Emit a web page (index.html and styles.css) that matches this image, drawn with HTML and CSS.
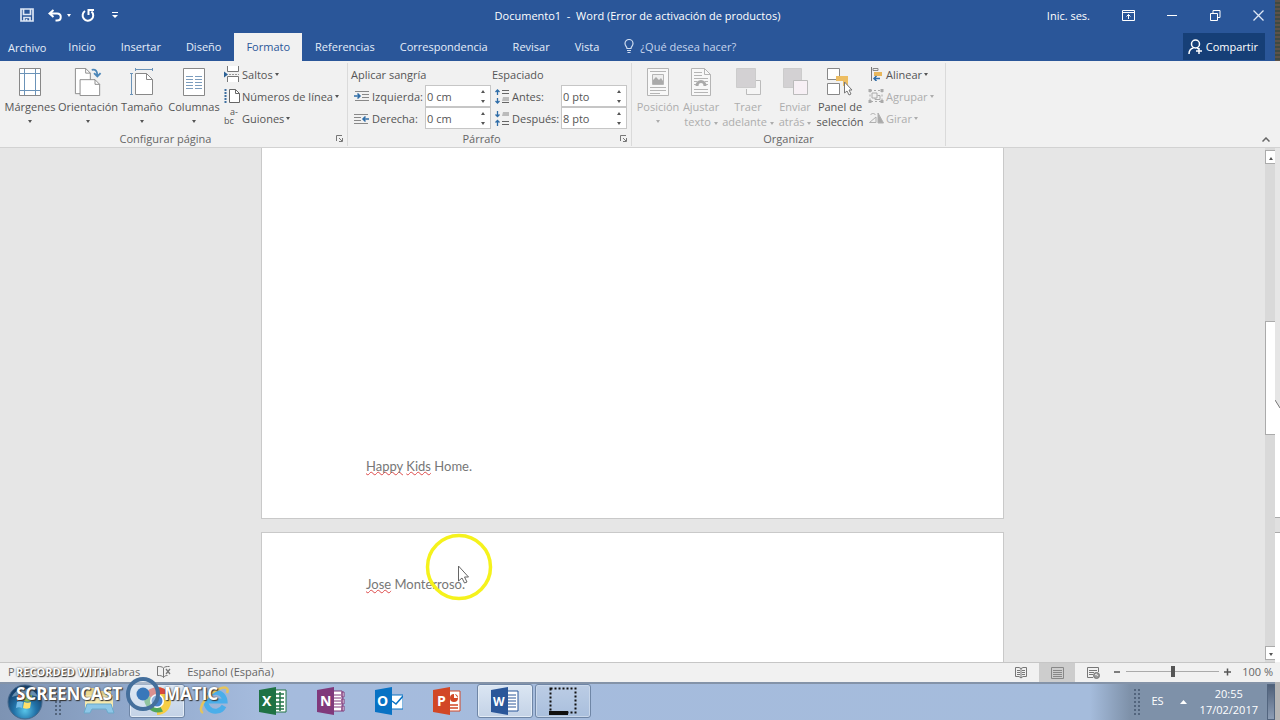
FILE: index.html
```html
<!DOCTYPE html>
<html lang="es">
  <head>
    <meta charset="UTF-8" />
    <meta name="viewport" content="width=device-width, initial-scale=1.0" />
    <title>Documento1 - Word</title>
    <link rel="stylesheet" href="styles.css">
  </head>
  <body>
    <div class="screen">
      <div class="desktop">
        <header class="titlebar">
          <div class="quick-access">
            <button type="button" aria-label="Guardar"><svg width="14" height="14" viewBox="0 0 14 14" fill="none" stroke="#dce6f5" stroke-width="2"><path d="M1 1h12v12H1zM3.500 1v5.500h7V1M4 13V9.500h6V13M6.500 13v-2" stroke-width="1.700"/></svg></button>
            <button type="button" class="undo" aria-label="Deshacer"><svg width="14" height="13" viewBox="0 0 14 13" fill="none" stroke="#fff" stroke-width="2"><path d="M5.500 1L1.500 4.500l4 3.500M2 4.500h7c5 0 5 7 0 7H7.500"/></svg><i class="caret"></i></button>
            <button type="button" aria-label="Rehacer"><svg width="14" height="14" viewBox="0 0 14 14" fill="none" stroke="#fff" stroke-width="2"><path d="M4 3A5.300 5.300 0 1 0 10.500 3.500M7.500 7V2H13"/></svg></button>
            <button type="button" class="more" aria-label="Personalizar"><svg width="6" height="7" viewBox="0 0 6 7" fill="#fff"><path d="M0 0h6v1H0zM0 3h6L3 6z"/></svg></button>
          </div>
          <div class="title">Documento1 &nbsp;-&nbsp; Word (Error de activación de productos)</div>
          <div class="window-buttons">
            <a href="#" class="signin">Inic. ses.</a>
            <button type="button" aria-label="Opciones de presentación"><svg width="13" height="11" viewBox="0 0 13 11" fill="none" stroke="#fff"><path d="M.5.500h12v10H.5zM.5 2.500h12M6.500 9V4.500M4.500 6.500l2-2 2 2"/></svg></button>
            <button type="button" aria-label="Minimizar"><svg width="11" height="11" viewBox="0 0 11 11" stroke="#fff"><path d="M0 5.500h10"/></svg></button>
            <button type="button" aria-label="Restaurar"><svg width="11" height="11" viewBox="0 0 11 11" fill="none" stroke="#fff"><path d="M.5 3.500h7v7h-7zM3 3.500V.500h7v7H7.500"/></svg></button>
            <button type="button" aria-label="Cerrar"><svg width="11" height="11" viewBox="0 0 11 11" stroke="#dfe8f6" stroke-width="1.300"><path d="M.5.500l10 10M10.500.500l-10 10"/></svg></button>
          </div>
        </header>

        <nav class="tabs">
          <button type="button" class="tab file">Archivo</button>
          <button type="button" class="tab">Inicio</button>
          <button type="button" class="tab">Insertar</button>
          <button type="button" class="tab">Diseño</button>
          <button type="button" class="tab active">Formato</button>
          <button type="button" class="tab">Referencias</button>
          <button type="button" class="tab">Correspondencia</button>
          <button type="button" class="tab">Revisar</button>
          <button type="button" class="tab">Vista</button>
          <button type="button" class="tab tell-me"><svg width="10" height="14" viewBox="0 0 10 14" fill="none" stroke="#cfdcf0"><path d="M3 9.500C3 7.500 1 7 1 4.500a4 4 0 0 1 8 0C9 7 7 7.500 7 9.500zM3 11.500h4M3.500 13.500h3" stroke-width="1.200"/></svg>¿Qué desea hacer?</button>
          <button type="button" class="share"><svg width="15" height="16" viewBox="0 0 15 16" fill="none" stroke="#fff" stroke-width="1.500"><circle cx="7.500" cy="5" r="4"/><path d="M1 15c0-3.500 2-5.500 4.500-6M9 9l2 1M11 9v6M8 12h6"/></svg>Compartir</button>
        </nav>

        <section class="ribbon">
          <div class="group page-setup">
            <div class="group-body">
              <div class="big-buttons">
                <button type="button" class="big"><svg width="22" height="28" viewBox="0 0 22 28" fill="none"><path d="M.5.500h21v27H.5z" fill="#fff" stroke="#888"/><path d="M5.500 1v26M16.500 1v26M1 5.500h20M1 22.500h20" stroke="#6b93b8"/></svg><span>Márgenes</span><i class="caret"></i></button>
                <button type="button" class="big"><svg width="28" height="30" viewBox="0 0 28 30" fill="none"><path d="M.5.500h11l5 5v22H.5z" fill="#fff" stroke="#888"/><path d="M11.500.500v5h5" stroke="#888"/><path d="M5.500 12.500h16l5 5v12h-21z" fill="#fff" stroke="#888"/><path d="M21.500 12.500v5h5" stroke="#888"/><path d="M18 2c4-1 6 1 6 6M20.500 5.500L24 9l3.500-3.500" stroke="#4c86b8" stroke-width="2"/></svg><span>Orientación</span><i class="caret"></i></button>
                <button type="button" class="big"><svg width="24" height="28" viewBox="0 0 24 28" fill="none"><path d="M5.500 5.500h11l6 6v15h-17z" fill="#fff" stroke="#888"/><path d="M16.500 5.500v6h6" stroke="#888"/><path d="M5.500 1.500h17M5.500 0v3M22.500 0v3M1.500 5.500v21M0 5.500h3M0 26.500h3" stroke="#6b93b8"/></svg><span>Tamaño</span><i class="caret"></i></button>
                <button type="button" class="big"><svg width="22" height="28" viewBox="0 0 22 28" fill="none"><path d="M.5.500h21v27H.5z" fill="#fff" stroke="#888"/><path d="M3 8.500h7M3 11.500h7M3 14.500h7M3 17.500h7M3 20.500h7M12 8.500h7M12 11.500h7M12 14.500h7M12 17.500h7M12 20.500h7" stroke="#7b9cbd"/></svg><span>Columnas</span><i class="caret"></i></button>
              </div>
              <div class="small-buttons">
                <button type="button" class="small"><svg width="16" height="16" viewBox="0 0 16 16" fill="none" stroke="#777"><path d="M3.500 0v5.500h11V0M3.500 16v-5.500h11V16" fill="#fff"/><path d="M5 8.500h10" stroke="#999" stroke-dasharray="2 1"/><path d="M0 5.500l4 3-4 3z" fill="#2b6095" stroke="none"/></svg>Saltos<i class="caret"></i></button>
                <button type="button" class="small"><svg width="16" height="14" viewBox="0 0 16 14" fill="none"><path d="M5.500.500h6l4 4v9h-10z" fill="#fff" stroke="#666"/><path d="M11.500.500v4h4" stroke="#666"/><path d="M1.500 0v14" stroke="#3e6f9f" stroke-width="2" stroke-dasharray="2 1"/></svg>Números de línea<i class="caret"></i></button>
                <button type="button" class="small"><svg class="hyphens" width="16" height="22" viewBox="0 0 16 22" fill="#555"><text x="0" y="17">bc</text><text x="6" y="8">a-</text></svg>Guiones<i class="caret"></i></button>
              </div>
            </div>
            <div class="group-label"><span>Configurar página</span><button type="button" class="launcher" aria-label="Configurar página"><svg width="7" height="7" viewBox="0 0 7 7" fill="none" stroke="#777"><path d="M.5 6V.500H6M3 3l3 3M6.500 3v3.500H3"/></svg></button></div>
          </div>

          <div class="group paragraph">
            <div class="group-body">
              <div class="fields indent">
                <h2>Aplicar sangría</h2>
                <svg width="16" height="13" viewBox="0 0 16 13" fill="none"><path d="M1 1.500h14M8 4.500h7M8 7.500h7M1 10.500h14" stroke="#888"/><path d="M0 6h6M3.500 3.500L6 6 3.500 8.500" stroke="#2f6da8" stroke-width="1.500"/></svg>
                <label for="left">Izquierda:</label>
                <div class="spin"><input type="text" id="left" value="0 cm"><div class="arrows"><button type="button" aria-label="Más"><i class="caret up"></i></button><button type="button" aria-label="Menos"><i class="caret"></i></button></div></div>
                <svg width="16" height="13" viewBox="0 0 16 13" fill="none"><path d="M0 2.500h14M0 5.500h7M0 8.500h7M0 11.500h14" stroke="#888"/><path d="M9 7h6M11.500 4.500L9 7l2.500 2.500" stroke="#2f6da8" stroke-width="1.500"/></svg>
                <label for="right">Derecha:</label>
                <div class="spin"><input type="text" id="right" value="0 cm"><div class="arrows"><button type="button" aria-label="Más"><i class="caret up"></i></button><button type="button" aria-label="Menos"><i class="caret"></i></button></div></div>
              </div>
              <div class="fields spacing">
                <h2>Espaciado</h2>
                <svg width="15" height="15" viewBox="0 0 15 15" fill="none"><path d="M7 1.500h7M7 4.500h7M7 13.500h7" stroke="#666"/><path d="M8 8h6v4H7z" fill="#bbb"/><path d="M2.500 6V1M.5 3l2-2 2 2M2.500 9v5M.5 12l2 2 2-2" stroke="#2f6da8" stroke-width="1.300"/></svg>
                <label for="before">Antes:</label>
                <div class="spin"><input type="text" id="before" value="0 pto"><div class="arrows"><button type="button" aria-label="Más"><i class="caret up"></i></button><button type="button" aria-label="Menos"><i class="caret"></i></button></div></div>
                <svg width="15" height="15" viewBox="0 0 15 15" fill="none"><path d="M7 10.500h7M7 13.500h7" stroke="#666"/><path d="M8 1h6v4H7z" fill="#bbb"/><path d="M2.500 0v5M.5 3.500l2 2 2-2M2.500 15v-5M.5 11.500l2-2 2 2" stroke="#2f6da8" stroke-width="1.300"/></svg>
                <label for="after">Después:</label>
                <div class="spin"><input type="text" id="after" value="8 pto"><div class="arrows"><button type="button" aria-label="Más"><i class="caret up"></i></button><button type="button" aria-label="Menos"><i class="caret"></i></button></div></div>
              </div>
            </div>
            <div class="group-label"><span>Párrafo</span><button type="button" class="launcher" aria-label="Párrafo"><svg width="7" height="7" viewBox="0 0 7 7" fill="none" stroke="#777"><path d="M.5 6V.500H6M3 3l3 3M6.500 3v3.500H3"/></svg></button></div>
          </div>

          <div class="group arrange">
            <div class="group-body">
              <div class="big-buttons">
                <button type="button" class="big" disabled><svg width="22" height="28" viewBox="0 0 22 28" fill="none" stroke="#b5b5b5"><path d="M.5.500h21v27H.5z" fill="#f8f8f8"/><path d="M3 3.500h16M3 19.500h16M3 22.500h16M3 25.500h10"/><path d="M5.500 6.500h11v10h-11z" fill="#eee"/><path d="M6 16v-4l3-3 3 3 2-2 2 3v3z" fill="#aaa" stroke="none"/></svg><span>Posición</span><i class="caret"></i></button>
                <button type="button" class="big" disabled><svg width="20" height="28" viewBox="0 0 20 28" fill="none" stroke="#b5b5b5"><path d="M.5.500h13l6 6v21H.5z" fill="#f8f8f8"/><path d="M13.500.500v6h6M3 4.500h8M3 7.500h8M3 10.500h14M3 13.500h3M14 13.500h3M3 16.500h2M15 16.500h2M3 21.500h14M3 24.500h14"/><path d="M6 18c0-6 8-6 8 0" stroke="#aaa" stroke-width="3"/></svg><span>Ajustar<br>texto <i class="caret"></i></span></button>
                <button type="button" class="big" disabled><svg width="25" height="28" viewBox="0 0 25 28" fill="none" stroke="#bbb"><path d="M10.500 21v5.500h14v-14H20" fill="#f5f5f5"/><path d="M.5.500h19v19H.5z" fill="#d3d1d3" stroke="#ccc"/></svg><span>Traer<br>adelante <i class="caret"></i></span></button>
                <button type="button" class="big" disabled><svg width="25" height="28" viewBox="0 0 25 28" fill="none" stroke="#bbb"><path d="M.5.500h18v19H.5z" fill="#d3d1d3" stroke="#ccc"/><path d="M10.500 12.500h14v14h-14z" fill="#f7f0f5"/></svg><span>Enviar<br>atrás <i class="caret"></i></span></button>
                <button type="button" class="big"><svg width="26" height="28" viewBox="0 0 26 28" fill="none" stroke="#888"><path d="M.5.500h12v11H.5zM.5 15.500h12v11H.5z" fill="#fff"/><path d="M9 8h12v10h-5v-5H9z" fill="#edbd62" stroke="none"/><path d="M17.500 14v11l2.500-2 2 4 2-1-2-4h3z" fill="#fff" stroke="#777"/></svg><span>Panel de<br>selección</span></button>
              </div>
              <div class="small-buttons">
                <button type="button" class="small"><svg width="12" height="14" viewBox="0 0 12 14" fill="none"><path d="M1.500 0v14" stroke="#777"/><path d="M3 1.500h5v2H3z" stroke="#888"/><path d="M4 5h8v4H4z" fill="#e8b75c"/><path d="M10 11.500H4M6.500 9L4 11.500 6.500 14" stroke="#2f6da8" stroke-width="1.500"/></svg>Alinear<i class="caret"></i></button>
                <button type="button" class="small" disabled><svg width="15" height="14" viewBox="0 0 15 14" fill="none" stroke="#aaa"><path d="M1.500 1.500h12v11h-12z" stroke-dasharray="2 2"/><path d="M3.500 4h5v5h-5zM9 6.500h2.500v4H6.500V9"/><path d="M0 0h3v3H0zM12 0h3v3h-3zM0 11h3v3H0zM12 11h3v3h-3z" fill="#aaa" stroke="none"/></svg>Agrupar<i class="caret"></i></button>
                <button type="button" class="small" disabled><svg width="15" height="12" viewBox="0 0 15 12" fill="none" stroke="#b0b0b0"><path d="M1 10.500h6.500V5z"/><path d="M9.500 1v10H15z" fill="#aaa"/><path d="M2 3c1-2 4-2 5 0" /></svg>Girar<i class="caret"></i></button>
              </div>
            </div>
            <div class="group-label"><span>Organizar</span></div>
          </div>
          <button type="button" class="collapse" aria-label="Contraer la cinta"><svg width="8" height="5" viewBox="0 0 8 5" fill="none" stroke="#666" stroke-width="1.500"><path d="M.5 4.500L4 1l3.500 3.500"/></svg></button>
        </section>

        <main class="document">
          <div class="pages">
            <article class="page first"><p><span class="misspelled">Happy</span> <span class="misspelled">Kids</span> Home.</p></article>
            <article class="page second"><p><span class="misspelled">Jose</span> Monterroso.</p></article>
          </div>
          <div class="scrollbar">
            <button type="button" aria-label="Arriba"><i class="caret up"></i></button>
            <div class="track"><div class="thumb"></div></div>
            <button type="button" aria-label="Abajo"><i class="caret"></i></button>
          </div>
          <svg class="pointer" width="68" height="68" viewBox="0 0 68 68" fill="none"><circle cx="34" cy="34" r="31.500" stroke="#f5f21c" stroke-width="3.500"/><path d="M33.500 33v15l3.500-3 2.500 5 2.500-1-2.500-5h4z" fill="#fff" stroke="#666"/></svg>
        </main>

        <footer class="statusbar">
          <span class="page-count">P</span>
          <span class="word-count">alabras</span>
          <svg class="proof" width="14" height="12" viewBox="0 0 14 12" fill="none" stroke="#777"><path d="M6.500 2v9.500M6.500 2C5 .500 3 .500.500.500v9c3 0 4.500 0 6 2 1-1.500 2-2 4-2M6.500 2C8 .500 9.500.500 12.500.500"/><path d="M9 3l4 5M13 3L9 8" stroke-width="1.300"/></svg>
          <span class="language">Español (España)</span>
          <div class="views">
            <button type="button" aria-label="Lectura"><svg width="12" height="12" viewBox="0 0 12 12" fill="none" stroke="#777"><path d="M.5.500H4l2 1 2-1h3.500v9H8l-2 1.500-2-1.500H.5zM6 1v10M2 3.500h3M2 5.500h3M2 7.500h3M7 3.500h3M7 5.500h3M7 7.500h3"/></svg></button>
            <button type="button" class="on" aria-label="Diseño de impresión"><svg width="13" height="12" viewBox="0 0 13 12" fill="none" stroke="#888"><path d="M.5.500h12v11H.5zM2 3.500h9M2 5.500h9M2 7.500h9M2 9.500h9"/></svg></button>
            <button type="button" aria-label="Diseño web"><svg width="13" height="12" viewBox="0 0 13 12" fill="none" stroke="#777"><path d="M11.500 5V.500H.5v10H6M2 3.500h8M2 5.500h5M2 7.500h4"/><circle cx="9.500" cy="8.500" r="3" fill="#999"/><path d="M8 8l1.500-1 1 2" stroke="#eee"/></svg></button>
          </div>
          <div class="zoom">
            <button type="button" aria-label="Alejar"><svg width="7" height="8" viewBox="0 0 7 8" stroke="#555" stroke-width="1.500"><path d="M0 4h6"/></svg></button>
            <input type="range" min="0" max="100" value="50" aria-label="Zoom">
            <button type="button" aria-label="Acercar"><svg width="7" height="8" viewBox="0 0 7 8" stroke="#555" stroke-width="1.500"><path d="M0 4h7M3.500.500v7"/></svg></button>
            <span>100 %</span>
          </div>
        </footer>

        <div class="taskbar">
          <button type="button" class="start" aria-label="Inicio de Windows"><svg width="36" height="36" viewBox="0 0 36 36"><defs><radialGradient id="orb" cx="50%" cy="75%" r="65%"><stop offset="0" stop-color="#58c5ea"/><stop offset=".5" stop-color="#2272a8"/><stop offset="1" stop-color="#173f68"/></radialGradient></defs><circle cx="18" cy="18" r="17" fill="url(#orb)" stroke="#45688c"/><path d="M5 13C9 2 27 2 31 13c-8-3-18-3-26 0z" fill="#9dbdd6" opacity=".6"/><path d="M11 11c2-1 4-1 6 0l-1 6c-2-1-4-1-6 0z" fill="#e8673c"/><path d="M18 11c2 1 4 1 7 0l-1 6c-2 1-5 1-7 0z" fill="#93bd4c"/><path d="M10 18c2-1 4-1 6 0l-1 6c-2-1-4-1-6 0z" fill="#79bee9"/><path d="M17 18c2 1 5 1 7 0l-1 6c-2 1-5 1-7 0z" fill="#ffe069"/></svg></button>
          <i class="grip"></i>
          <div class="apps">
            <button type="button" class="app" aria-label="Explorador"><svg width="32" height="30" viewBox="0 0 32 30"><path d="M3 5l3-3h9l2 3h11v18H3z" fill="#ecd98d"/><path d="M2 9h28v14H2z" fill="#f5e9ae"/><path d="M4 18h24l3 9h-6l-2-4H9l-2 4H1z" fill="#8dc7e8" stroke="#6ba9ca"/></svg></button>
            <button type="button" class="app running" aria-label="Chrome"><svg width="30" height="30" viewBox="0 0 30 30"><path d="M15 15L2.900 8A14 14 0 0 1 27 8z" fill="#d8483d"/><path d="M15 15V1A14 14 0 0 1 15 29z" fill="#f6ce45"/><path d="M15 15l6 10.500A14 14 0 0 1 2.900 8z" fill="#51a659"/><path d="M15 1a14 14 0 0 1 12 7H15z" fill="#d8483d"/><circle cx="15" cy="15" r="7" fill="#fff"/><circle cx="15" cy="15" r="5.500" fill="#4681ca"/></svg></button>
            <button type="button" class="app" aria-label="Internet Explorer"><svg width="32" height="30" viewBox="0 0 32 30" fill="none"><path d="M25 20a9.500 9.500 0 1 1 1-5H9" stroke="#4aaeea" stroke-width="5"/><path d="M4 27C-3 23 9 7 20 3c7-3 10-1 8 4" stroke="#e5c45c" stroke-width="2.500"/></svg></button>
            <button type="button" class="app" aria-label="Excel"><svg width="28" height="28" viewBox="0 0 28 28"><path d="M14 3h13v22H14z" fill="#fff" stroke="#227447"/><path d="M17 7h8M17 11h8M17 15h8M17 19h8M17 22h8M21 5v19" stroke="#227447" stroke-width="1.500"/><path d="M0 3l17-3v28L0 25z" fill="#1f7244"/><text x="3" y="19" class="letter">X</text></svg></button>
            <button type="button" class="app" aria-label="OneNote"><svg width="28" height="28" viewBox="0 0 28 28"><path d="M14 4h11v20H14zM25 5h2v5h-2zM25 12h2v5h-2zM25 19h2v5h-2z" fill="#fff" stroke="#80397b"/><path d="M17 8h7M17 11h7M17 14h7M17 17h7M17 20h7" stroke="#80397b"/><path d="M0 3l17-3v28L0 25z" fill="#80397b"/><text x="3" y="19" class="letter">N</text></svg></button>
            <button type="button" class="app" aria-label="Outlook"><svg width="28" height="28" viewBox="0 0 28 28"><path d="M14 8h14v14H14z" fill="#fff" stroke="#0872c4"/><path d="M17 14l4 3 7-8" fill="none" stroke="#0872c4" stroke-width="1.500"/><path d="M0 3l17-3v28L0 25z" fill="#0872c4"/><text x="2" y="19" class="letter">O</text></svg></button>
            <button type="button" class="app" aria-label="PowerPoint"><svg width="28" height="28" viewBox="0 0 28 28"><path d="M14 4h13v20H14z" fill="#fff" stroke="#d24726"/><circle cx="21" cy="11" r="4" fill="#d24726"/><path d="M21 11V6l4 5z" fill="#fff"/><path d="M17 18h8M17 21h8" stroke="#d24726" stroke-width="1.500"/><path d="M0 3l17-3v28L0 25z" fill="#d24726"/><text x="4" y="19" class="letter">P</text></svg></button>
            <button type="button" class="app running" aria-label="Word"><svg width="28" height="28" viewBox="0 0 28 28"><path d="M14 4h13v20H14z" fill="#fff" stroke="#2a5699"/><path d="M17 8h8M17 11h8M17 14h8M17 17h8M17 20h8" stroke="#2a5699"/><path d="M0 3l17-3v28L0 25z" fill="#2a5699"/><text x="2" y="19" class="letter small-letter">W</text></svg></button>
            <button type="button" class="app running dim" aria-label="Screencast-O-Matic"><svg width="28" height="28" viewBox="0 0 28 28" fill="none" stroke="#111"><path d="M1.500 1.500h25v24h-25z" stroke-width="2" stroke-dasharray="2 2"/><path d="M0 26h19" stroke-width="4"/></svg></button>
          </div>
          <div class="tray">
            <i class="grip"></i>
            <span class="lang">ES</span>
            <button type="button" aria-label="Mostrar iconos ocultos"><svg width="7" height="4" viewBox="0 0 7 4"><path d="M0 4l3.500-4L7 4z" fill="#fff"/></svg></button>
            <div class="clock">20:55<br>17/02/2017</div>
            <button type="button" class="show-desktop" aria-label="Mostrar escritorio"></button>
          </div>
          <div class="watermark">
            <div>RECORDED WITH</div>
            <div class="brand"><span>SCREENCAST</span><svg width="36" height="36" viewBox="0 0 36 36" fill="none"><circle cx="18" cy="18" r="15" fill="#dde8f5" fill-opacity=".45" stroke="#446f9c" stroke-width="4"/><circle cx="18" cy="18" r="6.500" fill="#3977b9"/></svg><span>MATIC</span></div>
          </div>
        </div>
      </div>

      <!-- edge of the next screen -->
      <aside class="edge">
        <div class="edge-photo"></div>
        <div class="edge-ribbon"></div>
        <div class="edge-panel"><svg width="5" height="10" viewBox="0 0 5 10"><path d="M0 0l5 8v2H0z" fill="#fff"/><path d="M0 0l5 8" stroke="#777"/></svg></div>
        <div class="edge-page"></div>
        <div class="edge-gap"></div>
        <div class="edge-page last"></div>
        <div class="edge-bottom"></div>
      </aside>
    </div>
  </body>
</html>
```
FILE: styles.css
```css
* {
  box-sizing: border-box;
}
body {
  margin: 0;
  font-family: "Open Sans", "Noto Sans", sans-serif;
  font-size: 11px;
  line-height: 15px;
  color: #555;
}
button {
  padding: 0;
  border: none;
  background: none;
  color: inherit;
  font: inherit;
  white-space: nowrap;
}
svg {
  display: block;
  flex: none;
}
.screen {
  display: flex;
  height: 100vh;
  overflow: hidden;
}
.desktop {
  flex: 1;
  min-width: 0;
  display: flex;
  flex-direction: column;
}
.caret {
  display: inline-block;
  border: 2px solid transparent;
  border-top: 3px solid currentColor;
  border-bottom: none;
  vertical-align: middle;
}
.caret.up {
  border-top: none;
  border-bottom: 3px solid currentColor;
}

/* title bar */
.titlebar {
  display: grid;
  grid-template-columns: 1fr auto 1fr;
  align-items: center;
  height: 30px;
  background: #2a5699;
  color: #fff;
}
.quick-access {
  display: flex;
  align-items: center;
  gap: 10px;
  padding-left: 20px;
}
.quick-access .undo {
  display: flex;
  align-items: center;
  gap: 5px;
  padding-left: 4px;
}
.quick-access .more {
  padding-left: 7px;
}
.window-buttons {
  display: flex;
  justify-content: flex-end;
  align-items: center;
  gap: 32px;
  padding-right: 11px;
}
.signin {
  color: #fff;
  text-decoration: none;
}

/* tabs */
.tabs {
  display: flex;
  gap: 1px;
  height: 31px;
  padding-top: 3px;
  background: #2a5699;
  color: #e6eefa;
}
.tab {
  padding: 0 12px 2px;
}
.tab.file {
  padding: 0 9px 0 8px;
}
.tab.active {
  background: #f1f1f1;
  color: #2a5699;
}
.tell-me {
  display: flex;
  align-items: center;
  gap: 6px;
  color: #c5d4ec;
}
.share {
  display: flex;
  align-items: center;
  gap: 3px;
  margin: 0 10px 1px auto;
  padding: 0 7px 0 5px;
  background: #163f77;
  color: #fff;
}

/* ribbon */
.ribbon {
  display: flex;
  height: 87px;
  padding: 2px 0 1px;
  background: #f1f1f1;
  border-bottom: 1px solid #d2d2d2;
}
.group {
  display: flex;
  flex-direction: column;
  border-right: 1px solid #dadada;
}
.page-setup {
  width: 348px;
}
.paragraph {
  width: 284px;
}
.arrange {
  width: 314px;
}
.group-body {
  flex: 1;
  display: flex;
}
.group-label {
  display: flex;
  align-items: center;
  height: 15px;
  color: #666;
}
.group-label span {
  flex: 1;
  text-align: center;
}
.launcher {
  width: 16px;
  padding-left: 5px;
}
.big-buttons {
  display: grid;
  padding-right: 4px;
}
.page-setup .big-buttons {
  grid-template-columns: 60px 56px 52px 52px;
}
.arrange .big-buttons {
  grid-template-columns: 44px 42px 52px 42px 48px;
  padding-left: 4px;
}
.big {
  display: flex;
  flex-direction: column;
  align-items: center;
  padding-top: 5px;
}
.big svg {
  height: 28px;
  margin-bottom: 3px;
}
.big > .caret {
  margin-top: 6px;
}
.big span {
  display: block;
}
button:disabled {
  color: #adadad;
}
.small-buttons {
  display: flex;
  flex-direction: column;
}
.small {
  display: flex;
  align-items: center;
  gap: 2px;
  height: 22px;
}
.small svg {
  width: 16px;
}
.hyphens {
  overflow: visible;
  font-size: 9px;
}
.fields {
  display: grid;
  grid-template-rows: 22px 22px 22px;
  align-items: center;
}
.fields h2 {
  grid-column: 1 / -1;
  margin: 0 0 0 -3px;
  font-size: 11px;
  font-weight: normal;
}
.indent {
  grid-template-columns: 18px 53px 66px;
  padding-left: 6px;
}
.spacing {
  grid-template-columns: 17px 49px 66px;
  padding-left: 4px;
}
.spin {
  display: flex;
  height: 22px;
  background: #fff;
  border: 1px solid #c6c6c6;
}
.spin input {
  flex: 1;
  width: 0;
  padding: 0 1px;
  border: none;
  background: none;
  color: #555;
  font: inherit;
}
.arrows {
  display: flex;
  flex-direction: column;
  width: 14px;
}
.arrows button {
  flex: 1;
  display: flex;
  align-items: center;
  justify-content: center;
}
.collapse {
  align-self: flex-end;
  margin: 0 5px 4px auto;
}

/* document */
.document {
  position: relative;
  flex: 1;
  min-height: 0;
  display: flex;
  background: #e6e6e6;
}
.pages {
  flex: 1;
  display: flex;
  flex-direction: column;
  align-items: center;
  gap: 13px;
  overflow: hidden;
}
.page {
  flex: none;
  width: 100%;
  max-width: 743px;
  padding: 0 104px;
  background: #fff;
  border: 1px solid #c9c9c9;
  color: #777;
  font-family: Lato, sans-serif;
  font-size: 13px;
  line-height: 18px;
}
.page p {
  margin: 0;
}
.page.first {
  display: flex;
  align-items: flex-end;
  height: 371px;
  padding-bottom: 43px;
  border-top: none;
}
.page.second {
  height: 960px;
  padding-top: 42px;
}
.misspelled {
  text-decoration: underline wavy #dd4a4a 1px;
  text-decoration-skip-ink: none;
  text-underline-offset: 0;
}
.scrollbar {
  display: flex;
  flex-direction: column;
  width: 10px;
  padding: 2px 0;
  background: #d9d9d9;
}
.scrollbar > button {
  height: 14px;
  background: #fff;
  border: 1px solid #ababab;
  border-right: none;
  line-height: 10px;
}
.track {
  flex: 1;
  padding-top: 157px;
}
.thumb {
  height: 114px;
  background: #fff;
  border: 1px solid #ababab;
  border-right: none;
}
.pointer {
  position: absolute;
  left: 425px;
  top: 385px;
}

/* status bar */
.statusbar {
  display: flex;
  align-items: center;
  height: 20px;
  padding: 0 0 2px 8px;
  background: #f1f1f1;
  border-top: 1px solid #c6c6c6;
  color: #666;
}
.word-count {
  margin-left: 88px;
}
.proof {
  margin: 0 16px 0 17px;
}
.views {
  display: flex;
  align-self: stretch;
  margin: 0 0 -2px auto;
}
.views button {
  display: flex;
  align-items: center;
  justify-content: center;
  width: 36px;
}
.views .on {
  background: #cdcdcd;
}
.zoom {
  display: flex;
  align-items: center;
  gap: 5px;
  padding: 0 2px 0 3px;
}
.zoom span {
  margin-left: 6px;
}
.zoom input {
  appearance: none;
  width: 93px;
  height: 1px;
  margin: 0;
  background: #aaa;
}
.zoom input::-webkit-slider-thumb {
  appearance: none;
  width: 4px;
  height: 11px;
  background: #555;
}

/* taskbar */
.taskbar {
  position: relative;
  display: flex;
  align-items: center;
  height: 38px;
  border-top: 2px solid #8493a8;
  background: linear-gradient(90deg, #7d93b3, #8fa7ca 120px, #a5bbdd 260px, #a5bcdc 1090px, #7e91a9 1130px);
}
.start {
  margin-left: 7px;
}
.grip {
  width: 8px;
  height: 28px;
  background-image: radial-gradient(#53657d 1px, transparent 1px);
  background-size: 4px 4px;
}
.start + .grip {
  margin: 0 8px 0 11px;
}
.apps {
  display: flex;
  align-self: stretch;
  padding-bottom: 2px;
}
.app {
  display: flex;
  align-items: center;
  justify-content: center;
  width: 56px;
  margin: 0 1px;
  border: 1px solid transparent;
  border-radius: 3px;
}
.app.running {
  border-color: #6f86a6;
  background: linear-gradient(#dbe6f3, #c3d2e6);
  box-shadow: inset 0 0 0 1px #e3ecf6;
}
.app.dim {
  background: linear-gradient(#bccde5, #a9bfdd);
  box-shadow: inset 0 0 0 1px #c9d7ea;
}
.letter {
  fill: #fff;
  font-size: 14px;
  font-weight: bold;
}
.small-letter {
  font-size: 12px;
}
.tray {
  display: flex;
  align-items: center;
  align-self: stretch;
  margin-left: auto;
  color: #fff;
}
.lang {
  margin: 0 16px 4px 10px;
}
.clock {
  margin: 0 9px 0 13px;
  line-height: 16px;
  text-align: center;
}
.show-desktop {
  align-self: stretch;
  width: 8px;
  border: 1px solid #52657f;
  background: linear-gradient(#4f6079, #8c9db5);
}
.watermark {
  position: absolute;
  left: 16px;
  top: -19px;
  color: #fff;
  font-size: 11px;
  font-weight: bold;
  line-height: 14px;
  text-shadow: 1px 1px 1px #333, 0 0 2px #444;
}
.watermark .brand {
  display: flex;
  align-items: center;
  gap: 3px;
  height: 30px;
  font-size: 17px;
}

/* strip at the right edge */
.edge {
  display: flex;
  flex-direction: column;
  width: 5px;
  background: #fff;
}
.edge-photo {
  height: 61px;
  background: repeating-linear-gradient(#5c5248, #5c5248 2px, #3f4a42 2px, #3f4a42 4px);
}
.edge-ribbon {
  height: 87px;
  background: #f1f1f1;
  border-bottom: 1px solid #d2d2d2;
}
.edge-panel {
  display: flex;
  align-items: flex-end;
  height: 262px;
  background: #e6e6e6;
}
.edge-page {
  height: 107px;
}
.edge-gap {
  height: 16px;
  background: #e0e0e0;
  border: 1px solid #aaa;
  border-width: 1px 0;
}
.edge-page.last {
  flex: 1;
}
.edge-bottom {
  height: 58px;
  border-top: 20px solid #f1f1f1;
  background: #b5b5b5;
}
```
